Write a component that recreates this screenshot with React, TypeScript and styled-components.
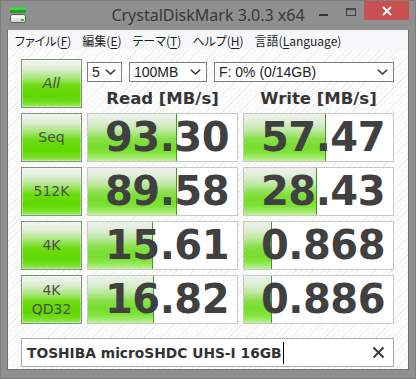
import React from "react";
import styled, { createGlobalStyle } from "styled-components";

const Global = createGlobalStyle`
  html, body { margin: 0; padding: 0; overflow: hidden; background: #8f8f8f; }
  #root { width: 416px; height: 379px; }
`;

const Window = styled.div`
  width: 416px;
  height: 379px;
  box-sizing: border-box;
  background: #8f8f8f;
  box-shadow: inset 0 0 0 1px #7c7c7c;
  display: flex;
  flex-direction: column;
`;

const TitleBar = styled.div`
  height: 30px;
  display: grid;
  grid-template-columns: 1fr auto 1fr;
  align-items: start;
`;

const AppIcon = styled.svg`
  margin: 6px 0 0 9px;
  display: block;
`;

const Title = styled.div`
  font-family: "Noto Sans", "DejaVu Sans", sans-serif;
  font-size: 16px;
  line-height: 30px;
  color: #383838;
  white-space: nowrap;
`;

const Controls = styled.div`
  display: flex;
  justify-content: flex-end;
  align-items: flex-start;
  padding-right: 7px;
`;

const MinBtn = styled.div`
  width: 9px;
  height: 2px;
  background: #333;
  margin: 14px 18px 0 0;
`;

const MaxBtn = styled.div`
  width: 10px;
  height: 8px;
  box-sizing: border-box;
  border: 1px solid #444;
  border-top-width: 2px;
  margin: 8px 8px 0 0;
`;

const CloseBtn = styled.div`
  width: 45px;
  height: 19px;
  margin-top: 1px;
  background: #c75050;
  display: flex;
  align-items: center;
  justify-content: center;
`;

const Client = styled.div`
  flex: 1;
  margin: 0 7px 9px 7px;
  border: 1px solid #747474;
  border-top: none;
  display: flex;
  flex-direction: column;
  min-height: 0;
`;

const MenuBar = styled.div`
  height: 20px;
  background: #f6f7f8;
  display: flex;
  align-items: center;
  gap: 11px;
  padding-left: 7px;
  font-family: "Noto Sans CJK JP", "Noto Sans", sans-serif;
  font-feature-settings: "palt";
  font-size: 12px;
  color: #1e1e1e;
`;

const MenuItem = styled.span`
  white-space: nowrap;
  & u { text-decoration: underline; text-underline-offset: 2px; }
`;

const Content = styled.div`
  flex: 1;
  padding: 9px 0 0 13px;
  background: repeating-linear-gradient(135deg, #ffffff 0 3px, #eeeeee 3px 4px);
`;

const Grid = styled.div`
  display: grid;
  grid-template-columns: 61px 151px 151px;
  grid-template-rows: repeat(5, 49px);
  column-gap: 5px;
  row-gap: 5px;
`;

const TestButton = styled.div<{ $italic?: boolean }>`
  box-sizing: border-box;
  border: 1px solid #7b927b;
  box-shadow: inset 0 0 0 1px rgba(255, 255, 255, 0.35);
  background: linear-gradient(
    to bottom,
    #f3f4f2 0%,
    #dfeed6 18%,
    #a8e57a 38%,
    #6cdc10 55%,
    #5fd800 78%,
    #74df22 90%,
    #9ce95e 100%
  );
  display: flex;
  flex-direction: column;
  align-items: center;
  justify-content: center;
  font-family: "DejaVu Sans", sans-serif;
  font-size: 14px;
  line-height: 19px;
  color: #4f4f4f;
  font-style: ${(p) => (p.$italic ? "italic" : "normal")};
`;

const TopBlock = styled.div`
  grid-column: 2 / 4;
  display: flex;
  flex-direction: column;
`;

const SelectRow = styled.div`
  margin-top: 3px;
  display: flex;
  gap: 7px;
  height: 20px;
`;

const Select = styled.div<{ $w: number }>`
  width: ${(p) => p.$w}px;
  box-sizing: border-box;
  height: 20px;
  border: 1px solid #7d7d7d;
  background: #fff;
  display: flex;
  align-items: center;
  justify-content: space-between;
  padding: 0 5px 0 4px;
  font-family: "Liberation Sans", Arial, sans-serif;
  font-size: 14px;
  color: #222;
`;

const HeaderRow = styled.div`
  margin-top: 8px;
  display: grid;
  grid-template-columns: 151px 151px;
  column-gap: 5px;
`;

const Header = styled.div`
  text-align: center;
  font-family: "DejaVu Sans", sans-serif;
  font-weight: bold;
  font-size: 16.5px;
  line-height: 18px;
  color: #353535;
  white-space: nowrap;
`;

const Cell = styled.div`
  position: relative;
  box-sizing: border-box;
  border: 1px solid #c8c8c8;
  background: #fff;
  overflow: hidden;
`;

const Bar = styled.div`
  position: absolute;
  left: 0;
  top: 0;
  bottom: 0;
  box-sizing: border-box;
  border-right: 1px solid #3f9a2a;
  background: linear-gradient(
    to bottom,
    #eef0ec 0%,
    #e2eedb 15%,
    #bde9a0 35%,
    #8be04c 52%,
    #77de2c 68%,
    #7fe23a 82%,
    #a6ec72 94%,
    #c4f29e 100%
  );
`;

const Value = styled.div`
  position: relative;
  text-align: right;
  padding-right: 8px;
  font-family: "DejaVu Sans", sans-serif;
  font-weight: bold;
  font-size: 40px;
  line-height: 47px;
  color: #404040;
  letter-spacing: -0.5px;
`;

const CommentBox = styled.div`
  grid-column: 1 / 4;
  margin-top: 9px;
  height: 29px;
  box-sizing: border-box;
  border: 1px solid #acacac;
  background: #fff;
  display: flex;
  align-items: center;
  padding: 0 8px 0 5px;
`;

const CommentText = styled.span`
  font-family: "DejaVu Sans", sans-serif;
  font-weight: bold;
  font-size: 13.8px;
  color: #333;
  white-space: nowrap;
`;

const Caret = styled.span`
  width: 1px;
  height: 22px;
  background: #000;
  margin-left: 1px;
`;

const ClearIcon = styled.svg`
  margin-left: auto;
  display: block;
`;

const Chevron = () => (
  <svg width="11" height="6" viewBox="0 0 11 6">
    <polyline points="0.8,0.8 5.5,5 10.2,0.8" fill="none" stroke="#333" strokeWidth="1.5" />
  </svg>
);

type Row = { label: string[]; read: string; rBar: number; write: string; wBar: number };

const rows: Row[] = [
  { label: ["Seq"], read: "93.30", rBar: 89, write: "57.47", wBar: 82 },
  { label: ["512K"], read: "89.58", rBar: 89, write: "28.43", wBar: 73 },
  { label: ["4K"], read: "15.61", rBar: 65, write: "0.868", wBar: 28 },
  { label: ["4K", "QD32"], read: "16.82", rBar: 66, write: "0.886", wBar: 28 },
];

export default function App() {
  return (
    <>
      <Global />
      <Window>
        <TitleBar>
          <div>
            <AppIcon width="18" height="18" viewBox="0 0 18 18">
              <rect x="1" y="1" width="16" height="3" rx="1" fill="#44d04a" />
              <rect x="1" y="4" width="16" height="3" fill="#1f9e2a" />
              <rect x="1.5" y="8.5" width="15" height="8" rx="2" fill="#dcdcdc" stroke="#5c5c5c" />
              <rect x="2.5" y="9.5" width="13" height="3" fill="#f4f4f4" />
              <rect x="12" y="13" width="3" height="2" fill="#2fc02f" />
            </AppIcon>
          </div>
          <Title>CrystalDiskMark 3.0.3 x64</Title>
          <Controls>
            <MinBtn />
            <MaxBtn />
            <CloseBtn>
              <svg width="10" height="10" viewBox="0 0 10 10">
                <path d="M1 1 L9 9 M9 1 L1 9" stroke="#fff" strokeWidth="1.8" />
              </svg>
            </CloseBtn>
          </Controls>
        </TitleBar>
        <Client>
          <MenuBar>
            <MenuItem>ファイル(<u>F</u>)</MenuItem>
            <MenuItem>編集(<u>E</u>)</MenuItem>
            <MenuItem>テーマ(<u>T</u>)</MenuItem>
            <MenuItem>ヘルプ(<u>H</u>)</MenuItem>
            <MenuItem>言語(<u>L</u>anguage)</MenuItem>
          </MenuBar>
          <Content>
            <Grid>
              <TestButton $italic>All</TestButton>
              <TopBlock>
                <SelectRow>
                  <Select $w={35}>
                    <span>5</span>
                    <Chevron />
                  </Select>
                  <Select $w={78}>
                    <span>100MB</span>
                    <Chevron />
                  </Select>
                  <Select $w={180}>
                    <span>F: 0% (0/14GB)</span>
                    <Chevron />
                  </Select>
                </SelectRow>
                <HeaderRow>
                  <Header>Read [MB/s]</Header>
                  <Header>Write [MB/s]</Header>
                </HeaderRow>
              </TopBlock>
              {rows.map((r) => (
                <React.Fragment key={r.label.join("-")}>
                  <TestButton>
                    {r.label.map((l) => (
                      <span key={l}>{l}</span>
                    ))}
                  </TestButton>
                  <Cell>
                    <Bar style={{ width: r.rBar }} />
                    <Value>{r.read}</Value>
                  </Cell>
                  <Cell>
                    <Bar style={{ width: r.wBar }} />
                    <Value>{r.write}</Value>
                  </Cell>
                </React.Fragment>
              ))}
              <CommentBox>
                <CommentText>TOSHIBA microSHDC UHS-I 16GB</CommentText>
                <Caret />
                <ClearIcon width="13" height="13" viewBox="0 0 13 13">
                  <path d="M1.5 1.5 L11.5 11.5 M11.5 1.5 L1.5 11.5" stroke="#3a3a3a" strokeWidth="2" />
                </ClearIcon>
              </CommentBox>
            </Grid>
          </Content>
        </Client>
      </Window>
    </>
  );
}
